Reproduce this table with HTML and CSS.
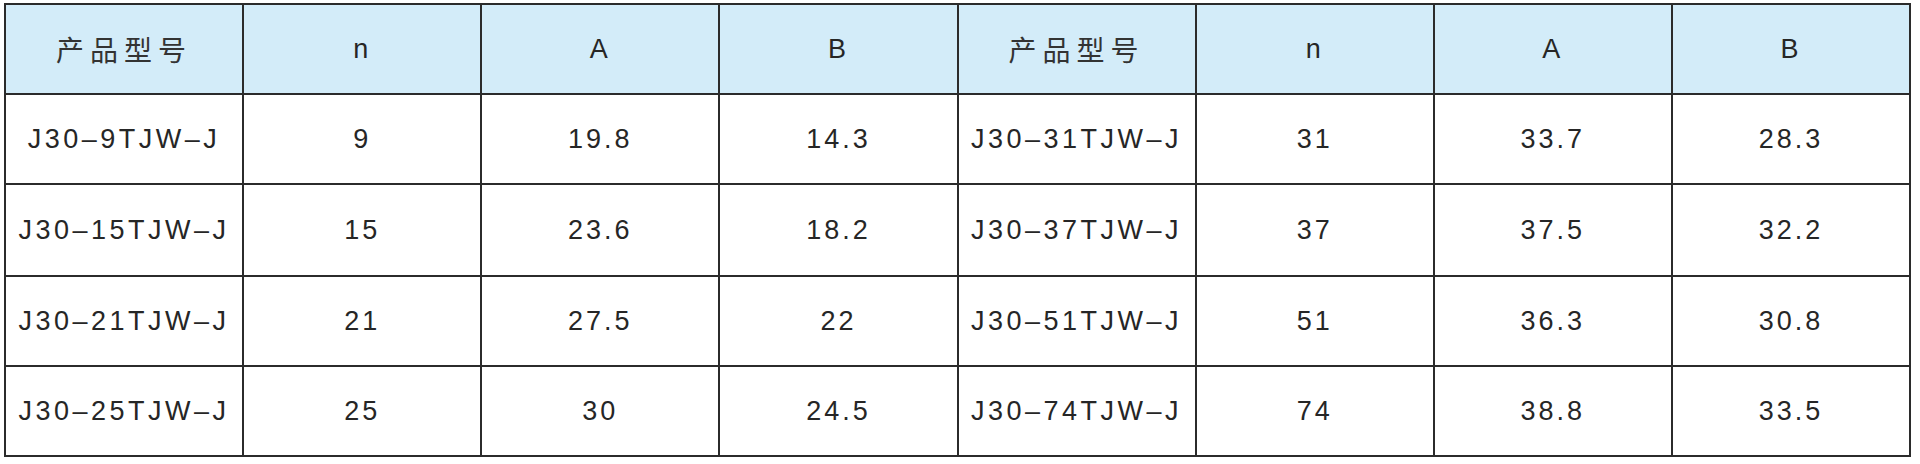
FILE: index.html
```html
<!DOCTYPE html>
<html lang="zh">
<head>
<meta charset="utf-8">
<title>J30 TJW-J</title>
<link rel="stylesheet" href="styles.css">
</head>
<body>
<div class="wrap">
<table class="spec">
<colgroup>
<col><col><col><col><col><col><col><col>
</colgroup>
<thead>
<tr>
<th class="cjk">产品型号</th><th>n</th><th>A</th><th>B</th>
<th class="cjk">产品型号</th><th>n</th><th>A</th><th>B</th>
</tr>
</thead>
<tbody>
<tr>
<td class="model">J30–9TJW–J</td><td>9</td><td>19.8</td><td>14.3</td>
<td class="model">J30–31TJW–J</td><td>31</td><td>33.7</td><td>28.3</td>
</tr>
<tr>
<td class="model">J30–15TJW–J</td><td>15</td><td>23.6</td><td>18.2</td>
<td class="model">J30–37TJW–J</td><td>37</td><td>37.5</td><td>32.2</td>
</tr>
<tr>
<td class="model">J30–21TJW–J</td><td>21</td><td>27.5</td><td>22</td>
<td class="model">J30–51TJW–J</td><td>51</td><td>36.3</td><td>30.8</td>
</tr>
<tr>
<td class="model">J30–25TJW–J</td><td>25</td><td>30</td><td>24.5</td>
<td class="model">J30–74TJW–J</td><td>74</td><td>38.8</td><td>33.5</td>
</tr>
</tbody>
</table>
</div>
</body>
</html>
```
FILE: styles.css
```css
html, body {
  margin: 0;
  padding: 0;
  background: #ffffff;
}
.wrap {
  padding: 3px 0 0 4px;
}
.spec {
  border-collapse: collapse;
  table-layout: fixed;
  width: 1907px;
  font-family: "Liberation Sans", Arial, sans-serif;
  color: #262626;
}
.spec col {
  width: 12.5%;
}
.spec th,
.spec td {
  border: 2px solid #2b2b2b;
  height: 88px;
  padding: 0;
  text-align: center;
  vertical-align: middle;
  font-size: 27px;
  font-weight: 400;
  letter-spacing: 3px;
  line-height: 1;
}
.spec thead th {
  background: #d3ecf9;
}
.spec th.cjk {
  font-family: "Noto Sans CJK SC", "Noto Sans", sans-serif;
  font-size: 28px;
  letter-spacing: 6px;
  color: #333333;
}
.spec td.model {
  letter-spacing: 3.5px;
}
.spec tbody tr:nth-child(2) td {
  height: 90px;
}
```
